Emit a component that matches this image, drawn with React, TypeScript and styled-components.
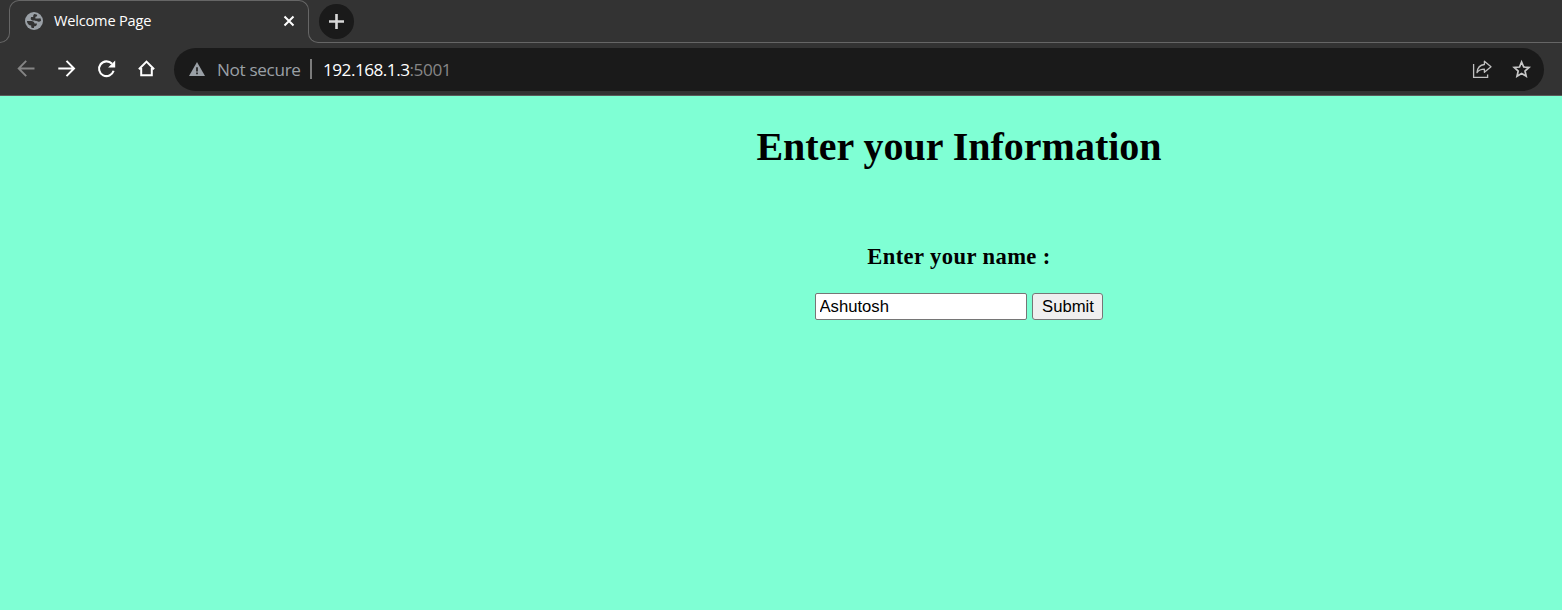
import React from "react";
import styled, { createGlobalStyle } from "styled-components";

const GlobalStyle = createGlobalStyle`
  * { box-sizing: border-box; }
  html, body { margin: 0; padding: 0; background: #7fffd4; }
  body { overflow: hidden; }
`;

const Browser = styled.div`
  width: 100%;
  height: 610px;
  display: flex;
  flex-direction: column;
  font-family: "Open Sans", "Noto Sans", sans-serif;
  background: #7fffd4;
  overflow: hidden;
`;

const TabStrip = styled.div`
  flex: none;
  display: flex;
  align-items: flex-start;
  height: 43px;
  background: #333333;
`;

const LeftFlare = styled.div`
  align-self: flex-end;
  width: 10px;
  height: 12px;
  margin-right: -1px;
  border: solid #666666;
  border-width: 0 1px 1px 0;
  border-bottom-right-radius: 10px;
`;

const Tab = styled.div`
  width: 300px;
  height: 31px;
  display: flex;
  align-items: flex-start;
  padding: 11px 13px 0 15px;
  border: 1px solid #666666;
  border-bottom: 0;
  border-radius: 10px 10px 0 0;
  svg { flex: none; display: block; }
`;

const TabTitle = styled.span`
  flex: 1;
  margin: -2px 0 0 11px;
  color: #ffffff;
  font-size: 14.6px;
  line-height: 20px;
  letter-spacing: -0.2px;
  white-space: nowrap;
`;

const StripRest = styled.div`
  position: relative;
  flex: 1;
  height: 43px;
  margin-left: -1px;
  padding: 4px 0 0 11px;
  &::after {
    content: "";
    position: absolute;
    left: 0;
    right: 0;
    bottom: 0;
    height: 12px;
    border: solid #666666;
    border-width: 0 0 1px 1px;
    border-bottom-left-radius: 10px;
    pointer-events: none;
  }
`;

const NewTab = styled.button`
  display: grid;
  place-items: center;
  width: 35px;
  height: 35px;
  padding: 0;
  border: 0;
  border-radius: 50%;
  background: #1a1a1a;
`;

const Toolbar = styled.div`
  flex: none;
  display: flex;
  align-items: center;
  height: 53px;
  padding: 0 18px 0 16px;
  background: #333333;
  border-bottom: 1px solid #5b5b5b;
`;

const ToolButton = styled.button`
  display: grid;
  place-items: center;
  width: 20px;
  height: 20px;
  margin-right: 20px;
  padding: 0;
  border: 0;
  background: none;
  svg { display: block; }
`;

const AddressBar = styled.div`
  flex: 1;
  display: flex;
  align-items: center;
  height: 43px;
  margin-left: -2px;
  padding: 0 12px 0 15px;
  border-radius: 22px;
  background: #1a1a1a;
  svg { flex: none; display: block; }
`;

const AddressText = styled.span<{ $color: string; $spacing: number }>`
  padding-top: 2px;
  color: ${(p) => p.$color};
  font-size: 17.2px;
  line-height: 24px;
  letter-spacing: ${(p) => p.$spacing}px;
  white-space: nowrap;
`;

const SecurityLabel = styled(AddressText)`
  width: 94px;
  margin-left: 12px;
`;

const Divider = styled.span`
  width: 2px;
  height: 20px;
  margin: 0 11px 0 -1px;
  background: #7c7c7c;
`;

const Actions = styled.div`
  display: flex;
  gap: 20px;
  margin-left: auto;
`;

const Page = styled.main`
  flex: 1;
  width: 1918px;
  display: flex;
  flex-direction: column;
  align-items: center;
  font-family: "Liberation Serif", "Times New Roman", serif;
  color: #000000;
`;

const Heading = styled.h1`
  margin: 28px 0 0;
  font-size: 40px;
  line-height: 46px;
`;

const Label = styled.h3`
  margin: 74px 0 0;
  font-size: 22.6px;
  line-height: 26px;
  letter-spacing: 0.4px;
`;

const Form = styled.form`
  display: flex;
  gap: 5px;
  margin-top: 23px;
`;

const NameInput = styled.input`
  width: 212px;
  height: 27px;
  padding: 0 3.5px;
  border: 1px solid #767676;
  border-radius: 2px;
  background: #ffffff;
  color: #000000;
  font: 16.67px "Liberation Sans", Arial, sans-serif;
  outline: 0;
`;

const SubmitButton = styled.button`
  width: 71px;
  height: 27px;
  padding: 0 0 0 1px;
  border: 1px solid #767676;
  border-radius: 3px;
  background: #efefef;
  color: #000000;
  font: 16.67px "Liberation Sans", Arial, sans-serif;
`;

const Globe = () => (
  <svg width="18" height="18" viewBox="0 0 18 18">
    <circle cx="9" cy="9" r="9" fill="#9aa0a6" />
    <path
      d="M9.6 1.9A7.1 7.1 0 0 1 16.1 8.6C15.5 9.7 14.2 10.1 13 9.5C12.2 9 11 9.2 10 8.5H7.6C5.8 8.2 5.2 6.2 6.2 4.9H8.2V4C8.2 3.1 8.8 2.2 9.6 1.9Z"
      fill="#333333"
    />
    <path d="M12.3 2.4C12.2 3.8 11.6 4.6 10.4 4.8V6.4H13L16.4 6.2L14.6 3.2Z" fill="#9aa0a6" />
    <path
      d="M1.9 8.9H6.2C8.2 8.9 9.4 10 9.5 11.4H12C12 13.4 10.8 14.4 9 14.4V16.1A7.1 7.1 0 0 1 6.2 15.5V13.6C4 13.4 2 11.6 1.9 8.9Z"
      fill="#333333"
    />
  </svg>
);

const App = () => (
  <>
    <GlobalStyle />
    <Browser>
      <TabStrip>
        <LeftFlare />
        <Tab>
          <Globe />
          <TabTitle>Welcome Page</TabTitle>
          <svg width="13" height="18" viewBox="0 0 13 18" stroke="#fff" strokeWidth="2">
            <path d="M2.5 4.5 11.5 13.5M11.5 4.5 2.5 13.5" />
          </svg>
        </Tab>
        <StripRest>
          <NewTab aria-label="New tab">
            <svg width="15" height="15" viewBox="0 0 15 15" stroke="#d8d8d8" strokeWidth="2.6">
              <path d="M7.5 0v15M0 7.5h15" />
            </svg>
          </NewTab>
        </StripRest>
      </TabStrip>
      <Toolbar>
        <ToolButton aria-label="Back">
          <svg width="20" height="20" viewBox="0 0 20 20" fill="none" stroke="#858585" strokeWidth="1.9">
            <path d="M18.5 9.5H3M10.2 1.9 2.7 9.5l7.5 7.6" />
          </svg>
        </ToolButton>
        <ToolButton aria-label="Forward">
          <svg width="20" height="20" viewBox="0 0 20 20" fill="none" stroke="#fff" strokeWidth="2">
            <path d="M2.3 9.5H18M10.5 1.9l7.5 7.6-7.5 7.6" />
          </svg>
        </ToolButton>
        <ToolButton aria-label="Reload">
          <svg width="20" height="20" viewBox="0 0 20 20" fill="none" stroke="#fff" strokeWidth="2.1">
            <path d="M17.6 11.8A7.4 7.4 0 1 1 16 4.8" />
            <path d="M19.2 1.5v7.1h-7.1Z" fill="#fff" stroke="none" />
          </svg>
        </ToolButton>
        <ToolButton aria-label="Home">
          <svg width="20" height="20" viewBox="0 0 20 20" fill="none" stroke="#fff" strokeWidth="2">
            <path d="M2.9 10.2 10.5 2.6l7.6 7.6M5.2 9v7.3h10.6V9" />
          </svg>
        </ToolButton>
        <AddressBar>
          <svg width="16" height="14" viewBox="0 0 16 14">
            <path d="M8 0 16 14H0Z" fill="#9aa0a6" />
            <path d="M7.2 5.2h1.6v4.2H7.2zM7.2 10.5h1.6v1.7H7.2z" fill="#1a1a1a" />
          </svg>
          <SecurityLabel $color="#9aa0a6" $spacing={-0.35}>Not secure</SecurityLabel>
          <Divider />
          <AddressText $color="#ffffff" $spacing={-0.52}>192.168.1.3</AddressText>
          <AddressText $color="#868686" $spacing={-0.4}>:5001</AddressText>
          <Actions>
            <svg width="20" height="20" viewBox="0 0 20 20" fill="none" stroke="#c0c0c0" strokeWidth="1.3">
              <path d="M1.6 5v13.3h14V15.5" />
              <path d="M12.4 2.2 19 7.7l-6.6 5.6V10.2C9 10.2 6.8 11 5 13.6c.4-4.7 2.8-7.6 7.4-8.1Z" strokeLinejoin="round" />
            </svg>
            <svg width="20" height="20" viewBox="0 0 20 20" fill="none" stroke="#c8c8c8" strokeWidth="1.7">
              <path d="m9.6 3 2.1 5 5.3.5-4 3.5 1.2 5.2-4.6-2.8-4.6 2.8 1.2-5.2-4-3.5 5.3-.5Z" />
            </svg>
          </Actions>
        </AddressBar>
      </Toolbar>
      <Page>
        <Heading>Enter your Information</Heading>
        <Label>Enter your name :</Label>
        <Form onSubmit={(e) => e.preventDefault()}>
          <NameInput defaultValue="Ashutosh" aria-label="Name" />
          <SubmitButton type="submit">Submit</SubmitButton>
        </Form>
      </Page>
    </Browser>
  </>
);

export default App;
